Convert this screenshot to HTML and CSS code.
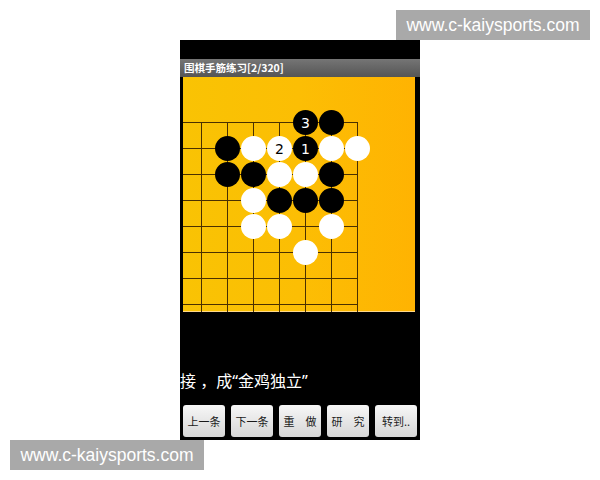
FILE: index.html
```html
<!DOCTYPE html>
<html>
<head>
<meta charset="utf-8">
<link rel="stylesheet" href="styles.css">
</head>
<body>
<div class="phone">
  <div class="status"></div>
  <div class="titlebar">围棋手筋练习[2/320]</div>
  <div class="board">
    <svg width="232" height="235" viewBox="0 0 232 235" xmlns="http://www.w3.org/2000/svg">
      <g stroke="#4a3000" stroke-width="1" shape-rendering="crispEdges">
        <line x1="0" y1="45.5" x2="174.5" y2="45.5"/>
        <line x1="0" y1="71.5" x2="174.5" y2="71.5"/>
        <line x1="0" y1="97.5" x2="174.5" y2="97.5"/>
        <line x1="0" y1="123.5" x2="174.5" y2="123.5"/>
        <line x1="0" y1="149.5" x2="174.5" y2="149.5"/>
        <line x1="0" y1="175.5" x2="174.5" y2="175.5"/>
        <line x1="0" y1="201.5" x2="174.5" y2="201.5"/>
        <line x1="0" y1="227.5" x2="174.5" y2="227.5"/>
        <line x1="18.5" y1="45.5" x2="18.5" y2="235"/>
        <line x1="44.5" y1="45.5" x2="44.5" y2="235"/>
        <line x1="70.5" y1="45.5" x2="70.5" y2="235"/>
        <line x1="96.5" y1="45.5" x2="96.5" y2="235"/>
        <line x1="122.5" y1="45.5" x2="122.5" y2="235"/>
        <line x1="148.5" y1="45.5" x2="148.5" y2="235"/>
        <line x1="174.5" y1="45.5" x2="174.5" y2="235"/>
      </g>
      <g fill="#000">
        <circle cx="122.5" cy="45.5" r="12.5"/>
        <circle cx="148.5" cy="45.5" r="12.5"/>
        <circle cx="44.5" cy="71.5" r="12.5"/>
        <circle cx="122.5" cy="71.5" r="12.5"/>
        <circle cx="44.5" cy="97.5" r="12.5"/>
        <circle cx="70.5" cy="97.5" r="12.5"/>
        <circle cx="148.5" cy="97.5" r="12.5"/>
        <circle cx="96.5" cy="123.5" r="12.5"/>
        <circle cx="122.5" cy="123.5" r="12.5"/>
        <circle cx="148.5" cy="123.5" r="12.5"/>
      </g>
      <g fill="#fff">
        <circle cx="70.5" cy="71.5" r="12.5"/>
        <circle cx="96.5" cy="71.5" r="12.5"/>
        <circle cx="148.5" cy="71.5" r="12.5"/>
        <circle cx="174.5" cy="71.5" r="12.5"/>
        <circle cx="96.5" cy="97.5" r="12.5"/>
        <circle cx="122.5" cy="97.5" r="12.5"/>
        <circle cx="70.5" cy="123.5" r="12.5"/>
        <circle cx="70.5" cy="149.5" r="12.5"/>
        <circle cx="96.5" cy="149.5" r="12.5"/>
        <circle cx="148.5" cy="149.5" r="12.5"/>
        <circle cx="122.5" cy="175.5" r="12.5"/>
      </g>
      <g class="num" text-anchor="middle">
        <text x="122.5" y="50.5" fill="#fff">3</text>
        <text x="122.5" y="76.5" fill="#fff">1</text>
        <text x="96.5" y="76.5" fill="#000">2</text>
      </g>
    </svg>
  </div>
  <div class="comment">接 ，成“金鸡独立”</div>
  <div class="buttons">
    <div class="btn">上一条</div>
    <div class="btn">下一条</div>
    <div class="btn">重　做</div>
    <div class="btn">研　究</div>
    <div class="btn">转到..</div>
  </div>
</div>
<div class="wm wm-top">www.c-kaiysports.com</div>
<div class="wm wm-bottom">www.c-kaiysports.com</div>
</body>
</html>
```
FILE: styles.css
```css
html, body {
  margin: 0;
  padding: 0;
  background: #fff;
}
body {
  width: 600px;
  height: 480px;
  position: relative;
  overflow: hidden;
  font-family: "Noto Sans CJK SC", "Noto Sans", sans-serif;
}
.phone {
  margin-left: 180px;
  margin-top: 40px;
  width: 240px;
  height: 400px;
  background: #000;
  display: flex;
  flex-direction: column;
}
.status {
  height: 19px;
  flex: none;
}
.titlebar {
  height: 18px;
  flex: none;
  background: linear-gradient(#757575, #555555);
  color: #fff;
  font-size: 10.5px;
  font-weight: bold;
  line-height: 18px;
  padding-left: 4px;
  white-space: nowrap;
}
.board {
  margin-left: 3px;
  width: 232px;
  height: 235px;
  flex: none;
  background: linear-gradient(90deg, #f9c304 0%, #fcbe04 50%, #ffb302 100%);
  box-shadow: inset 0 -1px 0 #ffd88a;
}
.board svg {
  display: block;
}
.num {
  font-family: "DejaVu Sans", sans-serif;
  font-size: 14px;
}
.comment {
  margin-top: 59px;
  height: 20px;
  line-height: 20px;
  color: #fff;
  font-family: "Noto Sans", "Noto Sans CJK SC", sans-serif;
  font-size: 16px;
  white-space: nowrap;
}
.buttons {
  margin-top: 14px;
  margin-left: 3px;
  display: flex;
  gap: 6px;
}
.btn {
  width: 42px;
  height: 32px;
  border-radius: 3px;
  background: linear-gradient(#f7f7f7, #d6d6d6);
  color: #1a1a1a;
  font-size: 11px;
  line-height: 32px;
  text-align: center;
  white-space: nowrap;
}
.wm {
  position: absolute;
  width: 194px;
  height: 30px;
  background: #a9a9a9;
  color: #fff;
  font-family: "Liberation Sans", Arial, sans-serif;
  font-size: 17.5px;
  line-height: 30px;
  text-align: center;
  white-space: nowrap;
}
.wm-top {
  left: 396px;
  top: 10px;
}
.wm-bottom {
  left: 10px;
  top: 440px;
}
```
